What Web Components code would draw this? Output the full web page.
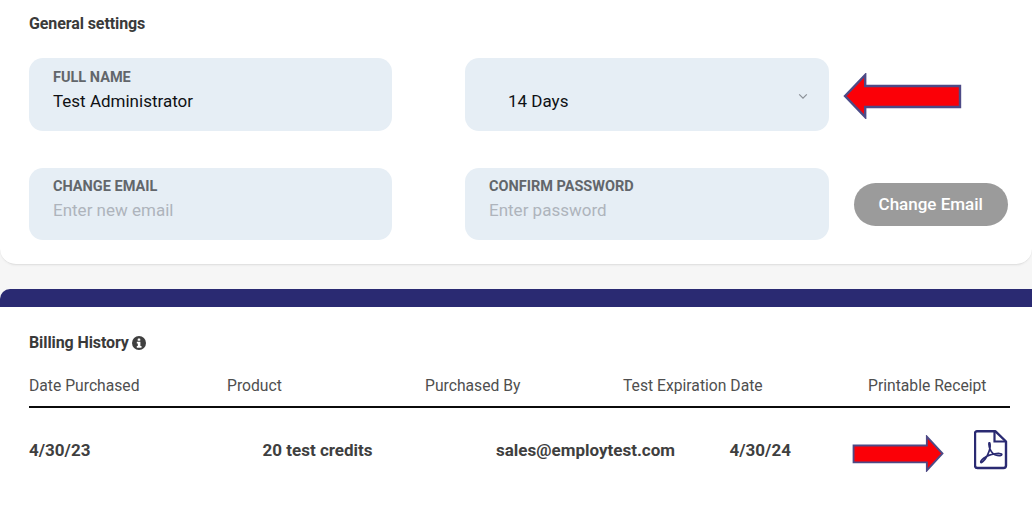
<!DOCTYPE html>
<html>
<head>
<meta charset="utf-8">
<style>
    html, body { margin: 0; height: 100%; }
    body {
        width: 1032px;
        height: 532px;
        overflow: hidden;
        position: relative;
        background: #f6f6f6;
        font-family: Roboto, "Liberation Sans", sans-serif;
    }
    settings-card { margin-bottom: 24px; }
    .row { display: flex; align-items: center; }
    .row.first { margin-bottom: 37px; }
    .pad { width: 73px; flex: none; }
    .pad-sm { width: 24.5px; flex: none; }
    .short { height: 72px; }
</style>
</head>
<body>

<template id="settings-card-tpl">
    <style>
        :host {
            display: block;
            box-sizing: border-box;
            height: 265px;
            padding: 15px 24px 0 29px;
            background: #fff;
            border-bottom: 1px solid #e2e2e2;
            border-radius: 0 0 16px 16px;
            box-shadow: 0 1px 2px rgba(0, 0, 0, .04);
        }
        h2 {
            margin: 0 0 26px;
            font-size: 16px;
            line-height: 17px;
            font-weight: 700;
            letter-spacing: -.1px;
            color: #3a3a3a;
        }
    </style>
    <h2><slot name="title"></slot></h2>
    <slot></slot>
</template>

<template id="form-field-tpl">
    <style>
        :host {
            display: flex;
            flex-direction: column;
            flex: none;
            box-sizing: border-box;
            width: 363px;
            height: 73px;
            padding: 11px 24px 0;
            background: #e6eef5;
            border-radius: 14px;
        }
        .label {
            font-size: 14.5px;
            line-height: 17px;
            font-weight: 700;
            color: #62666b;
        }
        .value {
            margin-top: 5px;
            font-size: 17px;
            line-height: 20px;
            color: #0f1114;
        }
        :host([empty]) { padding-top: 10px; }
        :host([empty]) .value { color: #aeb4bc; }
    </style>
    <div class="label"><slot name="label"></slot></div>
    <div class="value"><slot></slot></div>
</template>

<template id="select-field-tpl">
    <style>
        :host {
            display: flex;
            align-items: center;
            justify-content: space-between;
            flex: none;
            box-sizing: border-box;
            width: 364px;
            height: 73px;
            padding: 13px 21px 0 43px;
            background: #e6eef5;
            border-radius: 14px;
            font-size: 17px;
            color: #0f1114;
        }
        svg { display: block; margin-top: -10px; }
    </style>
    <slot></slot>
    <svg width="10" height="7" viewBox="0 0 10 7" fill="none" stroke="#8b9097" stroke-width="1.2">
        <path d="M1.2 1.4 5 5.2 8.8 1.4"/>
    </svg>
</template>

<template id="pill-button-tpl">
    <style>
        :host {
            display: flex;
            align-items: center;
            justify-content: center;
            flex: none;
            width: 154.5px;
            height: 43px;
            border-radius: 22px;
            background: #9b9b9b;
            color: #fff;
            font-size: 17px;
            font-weight: 500;
        }
    </style>
    <slot></slot>
</template>

<template id="billing-card-tpl">
    <style>
        :host {
            display: block;
            box-sizing: border-box;
            height: 243px;
            padding: 0 22px 0 29px;
            background: #fff;
            border-top: 18px solid #2a2a72;
            border-radius: 10px 0 0 0;
        }
        h2 {
            display: flex;
            align-items: center;
            gap: 3px;
            margin: 0;
            padding-top: 27px;
            font-size: 16px;
            line-height: 17px;
            font-weight: 700;
            letter-spacing: -.1px;
            color: #3a3a3a;
        }
        svg { display: block; }
    </style>
    <h2>
        <slot name="title"></slot>
        <svg width="14" height="14" viewBox="0 0 14 14">
            <circle cx="7" cy="7" r="7" fill="#3f3f3f"/>
            <rect x="5.7" y="2.4" width="2.6" height="2.4" rx=".6" fill="#fff"/>
            <path d="M4.8 5.8h3.6V10h1.1v1.7H4.8V10h1V7.5h-1z" fill="#fff"/>
        </svg>
    </h2>
    <slot></slot>
</template>

<template id="billing-head-tpl">
    <style>
        :host {
            display: grid;
            grid-template-columns: repeat(4, 198px) 1fr;
            height: 48px;
            margin-top: 9px;
            padding-top: 16px;
            box-sizing: border-box;
            border-bottom: 2px solid #0b0b0b;
            font-size: 15.7px;
            line-height: 19px;
            color: #4f4f4f;
        }
        ::slotted(:last-child) { padding-left: 47px; }
    </style>
    <slot></slot>
</template>

<template id="billing-row-tpl">
    <style>
        :host {
            display: grid;
            grid-template-columns: repeat(3, 233.5px) 1fr 33px;
            align-items: center;
            height: 46px;
            margin-top: 19px;
            font-size: 17px;
            font-weight: 700;
            color: #3f3f3f;
        }
    </style>
    <slot></slot>
</template>

<template id="pdf-icon-tpl">
    <style>
        :host { display: block; width: 34px; height: 40px; margin-left: -3px; }
        svg { display: block; }
    </style>
    <svg width="34" height="40" viewBox="0 0 34 40" fill="none" stroke="#2a2a72">
        <path d="M3 1.3H21.5L32 11.5V35.5a2.5 2.5 0 0 1-2.5 2.5H3.5a2.5 2.5 0 0 1-2.5-2.5V3.3a2 2 0 0 1 2-2z" stroke-width="2.4" stroke-linejoin="round"/>
        <path d="M20.5 2v9.5H32" stroke-width="2.2"/>
        <path d="M15.5 12.5c-1 0-.6 3.5.3 6 1.8 4.6 5 6.6 7.5 7 2 .3 4.5.2 4.5-1 0-1.3-4-1.2-7-.7-4 .6-8 2-10.5 4-2 1.5-4 3.5-3.5 4.5.6 1 3.5-1.5 5.5-5 2-3.6 3.6-7.5 3.8-10.5.1-2-.2-4.3-.6-4.3z" stroke-width="1.7"/>
    </svg>
</template>

<template id="red-arrow-tpl">
    <style>
        :host { display: block; position: absolute; }
        svg { display: block; }
    </style>
    <svg viewBox="0 0 118 46" width="100%" height="100%" preserveAspectRatio="none">
        <path d="M2 23 22 2V13H116V34H22V44z" fill="#fb0007" stroke="#4d4a86" stroke-width="2.4" stroke-linejoin="miter"/>
    </svg>
</template>

<settings-card>
    <span slot="title">General settings</span>
    <div class="row first">
        <form-field>
            <span slot="label">FULL NAME</span>
            Test Administrator
        </form-field>
        <div class="pad"></div>
        <select-field>14 Days</select-field>
    </div>
    <div class="row">
        <form-field class="short" empty>
            <span slot="label">CHANGE EMAIL</span>
            Enter new email
        </form-field>
        <div class="pad"></div>
        <form-field class="short" style="width:364px" empty>
            <span slot="label">CONFIRM PASSWORD</span>
            Enter password
        </form-field>
        <div class="pad-sm"></div>
        <pill-button>Change Email</pill-button>
    </div>
</settings-card>

<billing-card>
    <span slot="title">Billing History</span>
    <billing-head>
        <span>Date Purchased</span>
        <span>Product</span>
        <span>Purchased By</span>
        <span>Test Expiration Date</span>
        <span>Printable Receipt</span>
    </billing-head>
    <billing-row>
        <span>4/30/23</span>
        <span>20 test credits</span>
        <span>sales@employtest.com</span>
        <span>4/30/24</span>
        <pdf-icon></pdf-icon>
    </billing-row>
</billing-card>

<red-arrow style="left:843px;top:73px;width:119px;height:46px"></red-arrow>
<red-arrow style="left:852px;top:435px;width:92px;height:37px;transform:scaleX(-1)"></red-arrow>

<script>
    const simple = (name, tplId) => {
        const template = document.getElementById(tplId)
        customElements.define(name, class extends HTMLElement {
            constructor() {
                super()
                this.attachShadow({ mode: "open" }).append(template.content.cloneNode(true))
            }
        })
    }

    simple("settings-card", "settings-card-tpl")
    simple("form-field", "form-field-tpl")
    simple("select-field", "select-field-tpl")
    simple("pill-button", "pill-button-tpl")
    simple("billing-card", "billing-card-tpl")
    simple("billing-head", "billing-head-tpl")
    simple("billing-row", "billing-row-tpl")
    simple("pdf-icon", "pdf-icon-tpl")
    simple("red-arrow", "red-arrow-tpl")
</script>
</body>
</html>
